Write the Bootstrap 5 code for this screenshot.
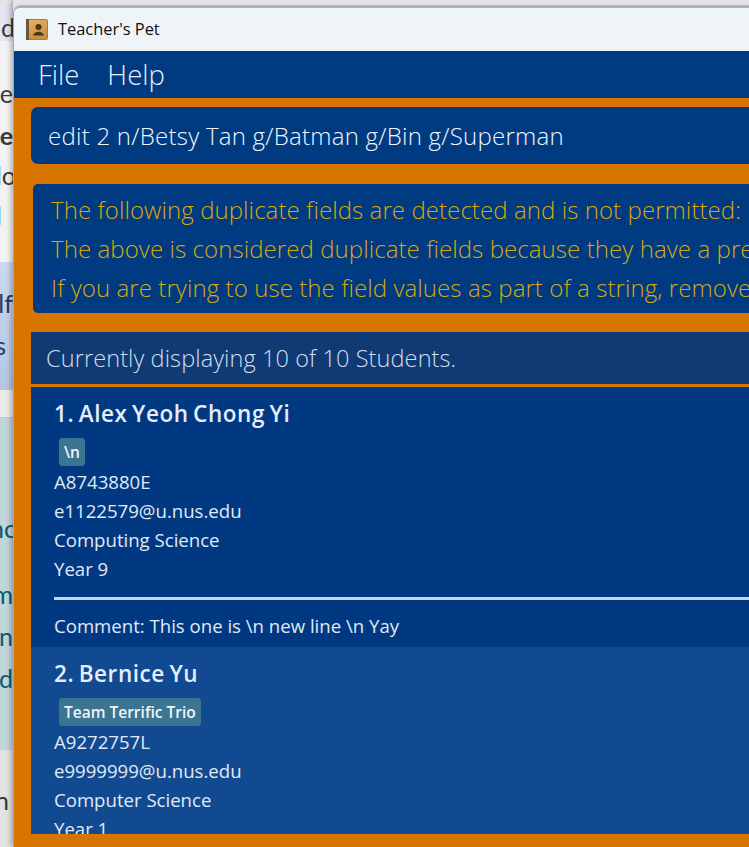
<!DOCTYPE html>
<html lang="en">
<head>
<meta charset="utf-8">
<title>Teacher's Pet</title>
<link href="https://cdn.jsdelivr.net/npm/bootstrap@5.3.0/dist/css/bootstrap.min.css" rel="stylesheet">
<style>
html,body{height:847px;overflow:hidden;margin:0}
body{background:#f2f2f2;font-family:"Open Sans","Liberation Sans",sans-serif;display:flex;flex-direction:row}
.back-strip{width:13px;flex:none;height:847px;overflow:hidden;font-family:"Lato","Open Sans",sans-serif;color:#3a3a3a;font-size:25px;line-height:24px;white-space:nowrap;display:flex;flex-direction:column}
.back-sec{flex:none;overflow:hidden;display:flex;flex-direction:column;align-items:flex-end}
.back-txt{flex:none;display:block}
.sec-top{height:4px;background:#e3e3e3}
.sec-tab{height:37px;background:linear-gradient(90deg,#e8e8f2,#dcdcec);padding-top:11px}
.sec-plain{height:221px;background:#f2f2f2}
.sec-blue{height:128px;background:linear-gradient(180deg,#cbd8ee,#b4c6e2);color:#1f3a6a}
.sec-grey{height:27px;background:#e9e9e9}
.sec-teal{height:333px;background:#c0d6da;color:#0d5a6f;border-top:1px solid #a9cfd6}
.sec-end{flex:1;background:#e2e2e2}
.tl-d{margin-right:-2px}
.tl-e1{margin-top:40px}.tl-e2{margin-top:18px}.tl-lo{margin-top:16px;margin-right:-3px}.tl-bar{margin-top:16px;margin-right:11px;color:#0a58ca}
.tl-if{margin-top:29px}.tl-s{margin-top:18px;margin-right:7px}
.tl-nc{margin-top:98px;margin-right:-3px}.tl-m{margin-top:42px}.tl-n{margin-top:18px}.tl-d2{margin-top:18px}
.tl-end{margin-top:38px;margin-right:4px}
.win-shell{flex:none;width:736px;height:847px;display:flex;flex-direction:column;background:#e3e3e3;position:relative;box-shadow:-2px 0 5px rgba(0,0,0,.28)}
.win-body{flex:1;margin-top:5px;display:flex;flex-direction:column;border-top:3px solid #b2b2b6;border-left:1px solid #a8a8ac;border-top-left-radius:8px;overflow:hidden;min-height:0}
.win-title{height:43px;flex:none;background:#eff4f9;color:#111;font-size:16.4px;padding-left:12px;gap:10px}
.win-menu{height:47px;flex:none;background:#003a80;color:#e6eefa;font-size:27.5px;font-weight:300;padding:0 0 0 24px;gap:28px}
.win-menu span{line-height:47px}
.win-main{flex:1;background:#d87400;padding:9px 0 13px 17px;display:flex;flex-direction:column;min-height:0}
.cmd-box{height:57px;flex:none;background:#003a80;border-radius:7px 0 0 7px;color:#f2f6fc;font-size:24px;letter-spacing:.25px;font-weight:300;padding-left:17px;white-space:nowrap;line-height:57px;overflow:hidden}
.res-box{height:129px;flex:none;margin:20px 0 19px 2px;background:#003a80;border-radius:5px 0 0 5px;color:#d8a90c;font-size:24px;letter-spacing:.08px;font-weight:300;padding:6px 0 0 18px;white-space:nowrap;overflow:hidden}
.res-box div{height:39px;line-height:39px}
.count-bar{height:52px;flex:none;background:#103a74;color:#d3deee;font-size:23.5px;letter-spacing:.1px;font-weight:300;padding-left:15px;line-height:52px;margin-bottom:3px;white-space:nowrap}
.stu-list{flex:1;min-height:0;overflow:hidden;border-radius:0}
.stu-item{border:0;border-radius:0!important;color:#e1e9f6;padding:0 0 0 23px;flex:none;background:#003882;font-size:18.6px;font-weight:400}
.stu-alt{background:#114a91}
.stu-one{height:260px}
.stu-name{font-size:22.5px;letter-spacing:.55px;word-spacing:-1.8px;font-weight:600;line-height:29px;padding-top:12px;height:51px;color:#e6edf8}
.stu-tags{height:29px;padding:0 0 0 5px}
.stu-tag{background:#3c7592;color:#eef4f8;font-size:15.5px;font-weight:600;padding:0 5px;border-radius:3px;height:28px;line-height:28px;display:inline-block;vertical-align:top;white-space:nowrap}
.stu-line{height:29px;line-height:29px;white-space:nowrap}
.stu-rule{height:3px;background:#c6d2e8;margin:14px 0 11px}
</style>
</head>
<body>
<div class="back-strip" aria-hidden="true">
  <div class="back-sec sec-top"></div>
  <div class="back-sec sec-tab"><span class="back-txt tl-d">.d</span></div>
  <div class="back-sec sec-plain">
    <span class="back-txt tl-e1">e</span>
    <span class="back-txt fw-bold tl-e2">e</span>
    <span class="back-txt tl-lo">lo</span>
    <span class="back-txt tl-bar">l</span>
  </div>
  <div class="back-sec sec-blue">
    <span class="back-txt tl-if">lf</span>
    <span class="back-txt tl-s">s</span>
  </div>
  <div class="back-sec sec-grey"></div>
  <div class="back-sec sec-teal">
    <span class="back-txt tl-nc">nc</span>
    <span class="back-txt tl-m">m</span>
    <span class="back-txt tl-n">n</span>
    <span class="back-txt tl-d2">d</span>
  </div>
  <div class="back-sec sec-end"><span class="back-txt tl-end">n</span></div>
</div>
<div class="win-shell">
  <div class="win-body">
    <div class="win-title d-flex align-items-center">
      <svg width="22" height="21" viewBox="0 0 22 21" aria-hidden="true">
        <defs><linearGradient id="bookfill" x1="0" y1="0" x2="0.3" y2="1"><stop offset="0" stop-color="#e4b366"/><stop offset="1" stop-color="#c98f3f"/></linearGradient></defs>
        <rect x="0.5" y="0.5" width="21" height="20" rx="1" fill="url(#bookfill)" stroke="#a87c3c"/>
        <rect x="0" y="0" width="3" height="21" fill="#6a5540"/>
        <circle cx="12.500" cy="8" r="3" fill="#4a3216"/>
        <path d="M7 16.500c.5-2.500 2.800-3 4.500-3.800h2c1.700.8 4 1.300 4.500 3.800z" fill="#4a3216"/>
      </svg>
      <span>Teacher's Pet</span>
    </div>
    <nav class="win-menu d-flex"><span>File</span><span>Help</span></nav>
    <main class="win-main">
      <div class="cmd-box">edit 2 n/Betsy Tan g/Batman g/Bin g/Superman</div>
      <div class="res-box">
        <div>The following duplicate fields are detected and is not permitted:</div>
        <div>The above is considered duplicate fields because they have a prefix in common.</div>
        <div>If you are trying to use the field values as part of a string, remove the prefix.</div>
      </div>
      <div class="count-bar">Currently displaying 10 of 10 Students.</div>
      <div class="list-group stu-list">
        <div class="list-group-item stu-item stu-one">
          <div class="stu-name">1. Alex Yeoh Chong Yi</div>
          <div class="stu-tags"><span class="stu-tag">\n</span></div>
          <div class="stu-line">A8743880E</div>
          <div class="stu-line">e1122579@u.nus.edu</div>
          <div class="stu-line">Computing Science</div>
          <div class="stu-line">Year 9</div>
          <div class="stu-rule"></div>
          <div class="stu-line">Comment: This one is \n new line \n Yay</div>
        </div>
        <div class="list-group-item stu-item stu-alt">
          <div class="stu-name">2. Bernice Yu</div>
          <div class="stu-tags"><span class="stu-tag">Team Terrific Trio</span></div>
          <div class="stu-line">A9272757L</div>
          <div class="stu-line">e9999999@u.nus.edu</div>
          <div class="stu-line">Computer Science</div>
          <div class="stu-line">Year 1</div>
        </div>
      </div>
    </main>
  </div>
</div>
<script src="https://cdn.jsdelivr.net/npm/bootstrap@5.3.0/dist/js/bootstrap.bundle.min.js"></script>
</body>
</html>
